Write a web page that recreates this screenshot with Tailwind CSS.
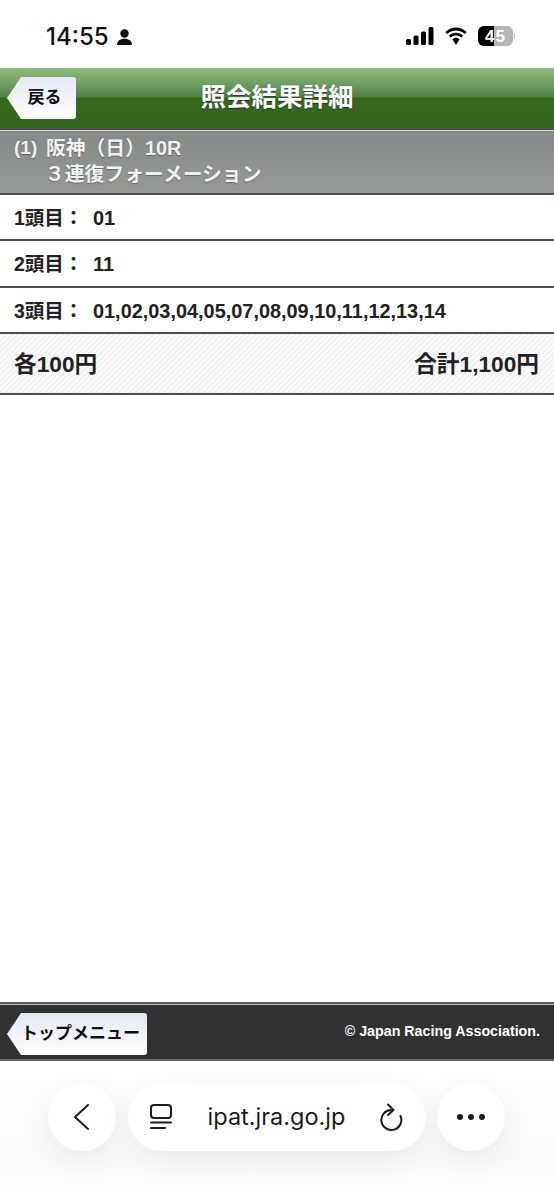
<!DOCTYPE html>
<html lang="ja">
<head>
<meta charset="UTF-8">
<meta name="viewport" content="width=device-width, initial-scale=1.0">
<title>照会結果詳細</title>
<script src="https://cdn.jsdelivr.net/npm/@tailwindcss/browser@4"></script>
</head>
<body class="bg-white font-['Liberation_Sans','Noto_Sans_CJK_JP',sans-serif]">
<div class="w-[554px] h-[1200px] flex flex-col overflow-hidden">
  <!-- status bar -->
  <div class="h-[68px] shrink-0 flex items-start justify-between pt-[23px] pl-[46px] pr-[39px] bg-white text-[#111]">
    <div class="flex items-center gap-[7px] h-[28px]">
      <span class="font-['Inter',sans-serif] font-medium text-[24px] leading-[28px]">14:55</span>
      <svg width="17" height="18" viewBox="0 0 16 18" fill="#111"><circle cx="8" cy="5.5" r="4.2"/><path d="M0.5 17c0-4 3-6.2 7.5-6.2s7.500 2.200 7.500 6.200z"/></svg>
    </div>
    <div class="flex items-center gap-[10px] h-[28px] -mt-[1px]">
      <svg width="28" height="18" viewBox="0 0 28 18" fill="#000"><rect x="0" y="12" width="5" height="6" rx="1.500"/><rect x="7.500" y="8.500" width="5" height="9.500" rx="1.500"/><rect x="15" y="4.500" width="5" height="13.500" rx="1.500"/><rect x="22.500" y="0" width="5" height="18" rx="1.500"/></svg>
      <svg width="24" height="18" viewBox="0 0 24 18" fill="#000"><path d="M12 3.500c3.400 0 6.500 1.300 8.800 3.500l1.900-2C19.900 2.300 16.200.5 12 .5S4.100 2.300 1.300 5l1.900 2c2.300-2.200 5.400-3.500 8.800-3.500z"/><path d="M12 8.500c2 0 3.900.8 5.300 2.100l1.900-2C17.300 6.800 14.800 5.700 12 5.700s-5.300 1.100-7.200 2.900l1.900 2C8.100 9.300 10 8.500 12 8.500z"/><path d="M12 10.800c-1.400 0-2.600.6-3.500 1.400L12 18l3.500-5.800c-.9-.8-2.100-1.400-3.500-1.400z"/></svg>
      <div class="flex items-center">
        <div class="relative w-[35px] h-[20px] rounded-[6px] overflow-hidden bg-[#b5b5b5] flex items-center justify-center">
          <div class="absolute left-0 top-0 bottom-0 w-[16px] bg-black"></div>
          <span class="relative text-white font-bold text-[17px] tracking-[1px] leading-none">45</span>
        </div>
        <div class="w-[1px] h-[6px] ml-[1px] bg-[#b5b5b5]"></div>
      </div>
    </div>
  </div>

  <!-- header -->
  <div class="relative h-[60px] shrink-0 flex items-center justify-center bg-[linear-gradient(#8fbc7f_0%,#6f9f62_25%,#4f8044_48%,#35691e_50%,#33661d_100%)]">
    <span class="font-bold text-white text-[25.500px] leading-none [text-shadow:0_1px_1px_rgba(0,0,0,0.5)]">照会結果詳細</span>
    <div class="absolute left-[7px] top-[9px] w-[69px] h-[42px] flex items-center justify-center pl-[6px] text-[17px] font-bold text-[#111]">
      <svg class="absolute inset-0" width="69" height="42" viewBox="0 0 69 42">
        <defs><linearGradient id="btn1" x1="0" y1="0" x2="0" y2="1"><stop offset="0" stop-color="#e2e8f4"/><stop offset="1" stop-color="#ffffff"/></linearGradient></defs>
        <path d="M0 21L14 0H66a3 3 0 0 1 3 3V39a3 3 0 0 1-3 3H14z" fill="url(#btn1)"/>
      </svg>
      <span class="relative">戻る</span>
    </div>
  </div>
  <div class="h-[2px] shrink-0 bg-[#4a4a4a]"></div>

  <!-- race heading -->
  <div class="h-[65px] shrink-0 border-t border-t-[#d8dbd8] border-b-2 border-b-[#4c4f4d] bg-[linear-gradient(#858a86,#959a96)] text-[#f2f2f2] pl-[14px] pt-[3px] font-bold text-[19.800px] leading-[28px] [text-shadow:0_1px_1px_rgba(0,0,0,0.3)]">
    <div class="flex"><span class="w-[32px] text-[19px]">(1)</span><span>阪神（日）10R</span></div>
    <div class="pl-[31px] -mt-[2px]">３連復フォーメーション</div>
  </div>

  <!-- selections -->
  <div class="h-[46px] shrink-0 flex items-center pl-[14px] pt-[3px] border-b-2 border-b-[#4c4c4c] font-bold text-[19.500px] text-[#222]">
    <span class="w-[79px]">1頭目：</span><span class="text-[19.900px]">01</span>
  </div>
  <div class="h-[47px] shrink-0 flex items-center pl-[14px] pt-[3px] border-b-2 border-b-[#4c4c4c] font-bold text-[19.500px] text-[#222]">
    <span class="w-[79px]">2頭目：</span><span class="text-[19.900px]">11</span>
  </div>
  <div class="h-[46px] shrink-0 flex items-center pl-[14px] pt-[3px] border-b-2 border-b-[#4c4c4c] font-bold text-[19.500px] text-[#222]">
    <span class="w-[79px]">3頭目：</span><span class="text-[19.900px]">01,02,03,04,05,07,08,09,10,11,12,13,14</span>
  </div>

  <!-- totals -->
  <div class="h-[61px] shrink-0 flex items-center justify-between pl-[14px] pr-[15px] pt-[1px] border-b-2 border-b-[#4c4c4c] font-bold text-[22.700px] text-[#222] bg-[repeating-linear-gradient(135deg,#f1f1f1_0px,#f1f1f1_2px,#fbfbfb_2px,#fbfbfb_4px)]">
    <span>各100円</span><span>合計1,100円</span>
  </div>

  <div class="grow"></div>

  <!-- footer -->
  <div class="h-[59px] shrink-0 border-t-2 border-t-[#555] border-b-2 border-b-[#666] relative flex items-center justify-end pr-[14px] bg-[#323232] shadow-[inset_0_1px_0_#bbb]">
    <span class="text-white font-bold text-[14.250px]">© Japan Racing Association.</span>
    <div class="absolute left-[7px] top-[9px] w-[140px] h-[42px] flex items-center justify-center pl-[7px] text-[17px] font-bold text-[#111]">
      <svg class="absolute inset-0" width="140" height="42" viewBox="0 0 140 42">
        <defs><linearGradient id="btn2" x1="0" y1="0" x2="0" y2="1"><stop offset="0" stop-color="#e2e8f4"/><stop offset="1" stop-color="#ffffff"/></linearGradient></defs>
        <path d="M0 21L14 0H137a3 3 0 0 1 3 3V39a3 3 0 0 1-3 3H14z" fill="url(#btn2)"/>
      </svg>
      <span class="relative whitespace-nowrap">トップメニュー</span>
    </div>
  </div>

  <!-- browser bar -->
  <div class="h-[139px] shrink-0 flex items-start gap-[11px] pl-[48px] pt-[22px] bg-[linear-gradient(#ffffff,#fbfbfb_70%,#ffffff)]">
    <div class="w-[68px] h-[68px] mr-[1px] rounded-full bg-white shadow-[0_10px_30px_rgba(0,0,0,0.07)] flex items-center justify-center">
      <svg width="20" height="28" viewBox="0 0 20 28" fill="none" stroke="#1c1c1c" stroke-width="2" stroke-linecap="round" stroke-linejoin="round"><path d="M16 2L3 14L16 26"/></svg>
    </div>
    <div class="w-[298px] h-[68px] rounded-full bg-white shadow-[0_10px_30px_rgba(0,0,0,0.07)] flex items-center pl-[22px] pr-[23px] justify-between">
      <svg width="22" height="26" viewBox="0 0 22 26" fill="none" stroke="#1c1c1c" stroke-width="2" stroke-linecap="round"><rect x="1" y="1" width="20" height="13" rx="3"/><path d="M1 18.500H21"/><path d="M1 24H15"/></svg>
      <span class="font-['Inter',sans-serif] text-[23.500px] text-[#1c1c1c] leading-none pl-[2px]">ipat.jra.go.jp</span>
      <svg width="24" height="28" viewBox="0 0 24 28" fill="none" stroke="#1c1c1c" stroke-width="2" stroke-linecap="round" stroke-linejoin="round"><path d="M12 7A10 10 0 1 0 21.500 13"/><path d="M9 1.500L14.500 7L9 12"/></svg>
    </div>
    <div class="w-[68px] h-[68px] rounded-full bg-white shadow-[0_10px_30px_rgba(0,0,0,0.07)] flex items-center justify-center gap-[5px]">
      <span class="w-[6px] h-[6px] rounded-full bg-[#1c1c1c]"></span><span class="w-[6px] h-[6px] rounded-full bg-[#1c1c1c]"></span><span class="w-[6px] h-[6px] rounded-full bg-[#1c1c1c]"></span>
    </div>
  </div>
</div>
</body>
</html>
